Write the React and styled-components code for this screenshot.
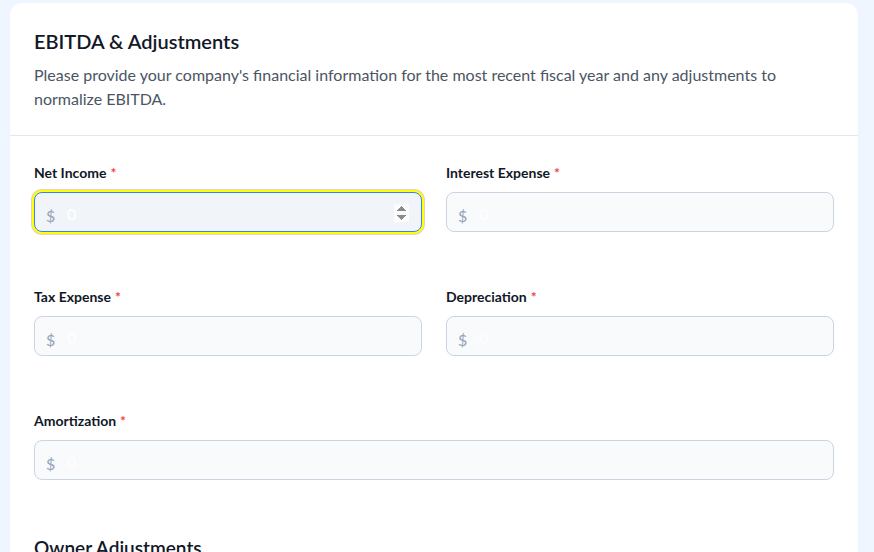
import React from "react";
import styled, { createGlobalStyle } from "styled-components";

const GlobalStyle = createGlobalStyle`
  html, body {
    margin: 0;
    padding: 0;
    background: #eff6ff;
    font-family: Lato, "Liberation Sans", sans-serif;
  }
  * {
    box-sizing: border-box;
  }
`;

const Page = styled.div`
  padding: 3px 16px 0 10px;
  height: 552px;
  overflow: hidden;
`;

const Card = styled.section`
  background: #ffffff;
  border-radius: 12px;
  box-shadow: 0 1px 2px rgba(15, 23, 42, 0.04);
  width: 848px;
`;

const Header = styled.header`
  padding: 24px;
  border-bottom: 1px solid #e5e7eb;
`;

const Title = styled.h2`
  margin: 0;
  font-size: 20px;
  line-height: 28px;
  font-weight: 600;
  color: #111827;
`;

const Description = styled.p`
  margin: 8px 0 0;
  font-size: 16px;
  line-height: 24px;
  color: #4b5563;
`;

const Body = styled.div`
  padding: 27px 24px 24px;
`;

const Grid = styled.div`
  display: grid;
  grid-template-columns: 1fr 1fr;
  column-gap: 24px;
  row-gap: 55px;
`;

const Field = styled.div`
  display: flex;
  flex-direction: column;
  gap: 9px;
  grid-column: ${(p) => (p.$full ? "1 / -1" : "auto")};
`;

const Label = styled.label`
  font-size: 14px;
  line-height: 20px;
  font-weight: 700;
  color: #111827;
`;

const Required = styled.span`
  color: #ef4444;
  margin-left: 4px;
`;

const InputWrap = styled.div`
  position: relative;
  display: flex;
  align-items: center;
`;

const Currency = styled.span`
  position: absolute;
  left: 12px;
  top: 12px;
  font-size: 16px;
  line-height: 24px;
  color: #94a3b8;
  pointer-events: none;
`;

const Input = styled.input`
  width: 100%;
  height: 40px;
  padding: 3px 12px 0 32px;
  border: 1px solid #cbd5e1;
  border-radius: 8px;
  background: #f8fafc;
  font-family: inherit;
  font-size: 16px;
  color: #111827;
  outline: none;

  &::placeholder {
    color: #ffffff;
  }

  &:focus {
    border-color: #3b82f6;
    background: #f1f5f9;
    box-shadow: 0 0 0 2px #ffff00, 0 0 0 3px #e4d3b8;
  }
`;

const SectionTitle = styled.h3`
  margin: 54px 0 0;
  font-size: 19px;
  line-height: 28px;
  font-weight: 600;
  color: #111827;
`;

const fields = [
  { id: "netIncome", label: "Net Income" },
  { id: "interest", label: "Interest Expense" },
  { id: "tax", label: "Tax Expense" },
  { id: "depreciation", label: "Depreciation" },
  { id: "amortization", label: "Amortization", full: true },
];

const MoneyField = ({ id, label, full, autoFocus }) => (
  <Field $full={full}>
    <Label htmlFor={id}>
      {label}
      <Required>*</Required>
    </Label>
    <InputWrap>
      <Currency>$</Currency>
      <Input id={id} type="number" placeholder="0" autoFocus={autoFocus} />
    </InputWrap>
  </Field>
);

export default function App() {
  return (
    <>
      <GlobalStyle />
      <Page>
        <Card>
          <Header>
            <Title>EBITDA &amp; Adjustments</Title>
            <Description>
              Please provide your company's financial information for the most
              recent fiscal year and any adjustments to normalize EBITDA.
            </Description>
          </Header>
          <Body>
            <Grid>
              {fields.map((f, i) => (
                <MoneyField key={f.id} {...f} autoFocus={i === 0} />
              ))}
            </Grid>
            <SectionTitle>Owner Adjustments</SectionTitle>
          </Body>
        </Card>
      </Page>
    </>
  );
}
